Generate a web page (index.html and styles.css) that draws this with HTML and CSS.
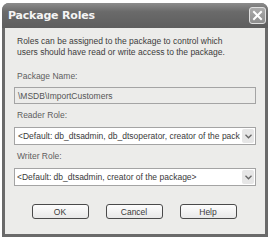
FILE: index.html
```html
<!DOCTYPE html>
<html lang="en">
<head>
    <meta charset="UTF-8">
    <title>Package Roles</title>
    <link rel="stylesheet" href="styles.css">
</head>
<body>
    <div class="window">
        <div class="titlebar">
            <span class="title">Package Roles</span>
            <span class="close-btn">
                <svg width="11" height="11" viewBox="0 0 11 11">
                    <path d="M2 2 L9 9 M9 2 L2 9" stroke="#fff" stroke-width="2" stroke-linecap="square"/>
                </svg>
            </span>
        </div>
        <div class="content">
            <p class="intro">Roles can be assigned to the package to control which<br>users should have read or write access to the package.</p>

            <div class="field-label first">Package Name:</div>
            <div class="textbox">\MSDB\ImportCustomers</div>

            <div class="field-label">Reader Role:</div>
            <div class="combo">
                <span class="combo-text"><span class="caret"></span>&lt;Default: db_dtsadmin, db_dtsoperator, creator of the package&gt;</span>
                <span class="combo-arrow">
                    <svg width="7" height="5" viewBox="0 0 7 5"><path d="M0.5 0.8 L3.5 3.8 L6.5 0.8" fill="none" stroke="#666" stroke-width="1.3"/></svg>
                </span>
            </div>

            <div class="field-label">Writer Role:</div>
            <div class="combo">
                <span class="combo-text">&lt;Default: db_dtsadmin, creator of the package&gt;</span>
                <span class="combo-arrow">
                    <svg width="7" height="5" viewBox="0 0 7 5"><path d="M0.5 0.8 L3.5 3.8 L6.5 0.8" fill="none" stroke="#666" stroke-width="1.3"/></svg>
                </span>
            </div>

            <div class="buttons">
                <button>OK</button>
                <button>Cancel</button>
                <button>Help</button>
            </div>
        </div>
    </div>
</body>
</html>
```
FILE: styles.css
```css
* {
    box-sizing: border-box;
}

body {
    margin: 0;
    background: #fff;
    font-family: "Liberation Sans", Arial, sans-serif;
}

.window {
    margin: 3px 3px 0 2px;
    width: 266px;
    height: 234px;
    background: #6a6a6a;
    border-radius: 7px 7px 0 0;
    padding: 0 3px 3px 3px;
    display: flex;
    flex-direction: column;
}

.titlebar {
    height: 25px;
    display: flex;
    align-items: center;
    justify-content: space-between;
    background: linear-gradient(#8c8c8c, #6a6a6a 35%, #5e5e5e);
    margin: 0 -3px;
    border-radius: 7px 7px 0 0;
    padding: 0 2px 0 6px;
}

.title {
    color: #f4f4f4;
    font-family: "DejaVu Sans", sans-serif;
    font-weight: bold;
    font-size: 11px;
    letter-spacing: -0.2px;
}

.close-btn {
    width: 17px;
    height: 17px;
    border: 1px solid #e0e0e0;
    border-radius: 3px;
    background: linear-gradient(#ababab, #8e8e8e);
    display: flex;
    align-items: center;
    justify-content: center;
}

.content {
    flex: 1;
    background: #ececea;
    padding: 8px 9px 0 9px;
    font-size: 8.5px;
    color: #3c3c3c;
}

.intro {
    margin: 0 0 0 3px;
    line-height: 11px;
}

.field-label {
    margin: 6px 0 6px 3px;
    line-height: 11px;
    color: #5e5e5e;
}

.field-label.first {
    margin-top: 13px;
    margin-bottom: 5px;
}

.textbox {
    height: 17px;
    border: 1px solid #a4a4a4;
    background: #ececea;
    display: flex;
    align-items: center;
    padding-left: 3px;
    color: #555;
}

.combo {
    height: 18px;
    border: 1px solid #a4a4a4;
    background: #fff;
    display: flex;
    align-items: center;
    padding-left: 2px;
}

.combo-text {
    flex: 1;
    white-space: nowrap;
    overflow: hidden;
    color: #3a3a3a;
    display: flex;
    align-items: center;
}

.caret {
    width: 1px;
    height: 11px;
    background: #333;
    margin-right: 1px;
}

.combo-arrow {
    width: 12px;
    height: 14px;
    margin: 0 1px 0 2px;
    background: #e6e6e6;
    border-radius: 2px;
    display: flex;
    align-items: center;
    justify-content: center;
}

.buttons {
    display: flex;
    justify-content: center;
    gap: 17px;
    margin-top: 18px;
    padding-right: 2px;
}

button {
    width: 57px;
    height: 15px;
    font-family: "Liberation Sans", Arial, sans-serif;
    font-size: 8.5px;
    color: #3a3a3a;
    background: linear-gradient(#fdfdfd, #e8e8e8);
    border: 1px solid #4a4a4a;
    border-radius: 3px;
    padding: 0;
}
```
